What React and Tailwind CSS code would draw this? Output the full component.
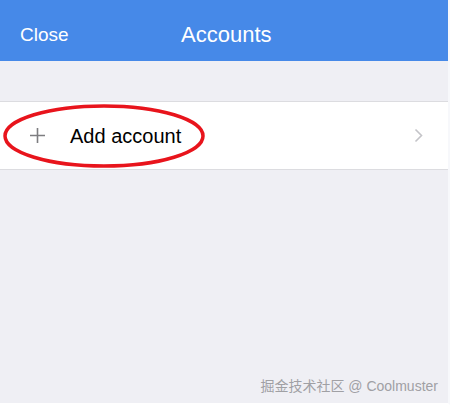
import React from 'react';

const App = () => {
  return (
    <div
      className="w-[450px] h-[405px] bg-[#efeff4] flex flex-col overflow-hidden border-r-2 border-r-[#f7f8fb] border-b-2 border-b-white"
      style={{ fontFamily: '"Liberation Sans", Arial, "Noto Sans CJK SC", sans-serif' }}
    >
      {/* header */}
      <div className="h-[61px] bg-[#4689e8] flex items-center pt-[9px] relative shrink-0">
        <span className="ml-[20px] text-[19px] text-white">Close</span>
        <span className="absolute left-[181px] top-[24px] text-[22px] leading-none text-white">Accounts</span>
      </div>

      <div className="h-[40px] shrink-0" />

      {/* account row */}
      <div className="h-[69px] bg-white border-y border-[#dcdce0] flex items-center relative shrink-0">
        <svg className="ml-[29px]" width="17" height="17" viewBox="0 0 17 17">
          <path d="M8.5 1v15M1 8.5h15" stroke="#7d7d80" strokeWidth="1.6" />
        </svg>
        <span className="ml-[24px] text-[20px] text-black">Add account</span>
        <svg className="ml-auto mr-[25px]" width="9" height="15" viewBox="0 0 9 15">
          <path d="M1.5 1.5l6 6-6 6" fill="none" stroke="#c4c4c8" strokeWidth="1.6" />
        </svg>
        {/* red annotation ellipse */}
        <svg className="absolute left-[2px] top-[1px]" width="204" height="66" viewBox="0 0 204 66">
          <ellipse cx="102" cy="33" rx="99" ry="30" fill="none" stroke="#e8141c" strokeWidth="3.5" />
        </svg>
      </div>

      <div className="flex-1 flex items-end justify-end pr-[10px] pb-[6px]">
        <span className="text-[14px] text-[#a0a0a4]">掘金技术社区 @ Coolmuster</span>
      </div>
    </div>
  );
};

export default App;
